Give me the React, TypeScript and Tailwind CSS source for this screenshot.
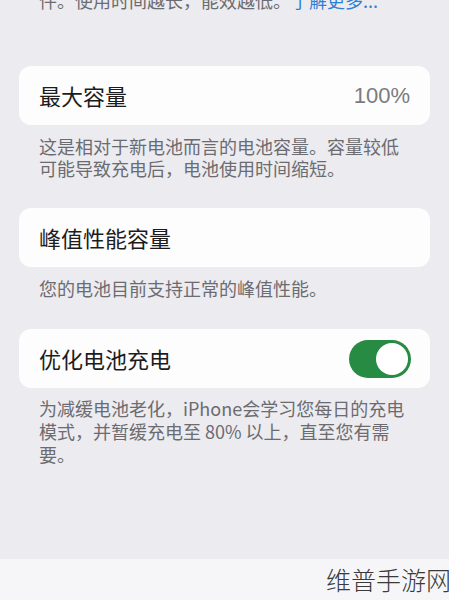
export default function App() {
  const font = { fontFamily: '"Noto Sans CJK SC", "Noto Sans", sans-serif' };

  return (
    <div
      className="w-[449px] h-[600px] overflow-hidden flex flex-col bg-[#ebebf0]"
      style={font}
    >
      <div className="flex-1 flex flex-col">
        {/* Cut-off footer from previous section */}
        <p className="mt-[-10px] px-[39px] text-[18px] leading-[21px] text-[#6c6c70] whitespace-nowrap">
          件。使用时间越长，能效越低。<span className="text-[#2f7fd1]">了解更多...</span>
        </p>

        {/* Maximum capacity */}
        <div className="mt-[55px] mx-[19px] h-[59px] rounded-[12px] bg-[#fdfdfd] flex items-center justify-between pl-[20px] pr-[20px]">
          <span className="text-[22px] text-[#1c1c1e]">最大容量</span>
          <span className="text-[22px] text-[#7b7b7f]" style={{ fontFamily: '"Liberation Sans", "Noto Sans", sans-serif' }}>
            100%
          </span>
        </div>
        <div className="mt-[10px] px-[39px] text-[18px] leading-[22px] text-[#6c6c70] flex flex-col">
          <span>这是相对于新电池而言的电池容量。容量较低</span>
          <span>可能导致充电后，电池使用时间缩短。</span>
        </div>

        {/* Peak performance */}
        <div className="mt-[29px] mx-[19px] h-[59px] rounded-[12px] bg-[#fdfdfd] flex items-center pl-[20px]">
          <span className="text-[22px] text-[#1c1c1e]">峰值性能容量</span>
        </div>
        <p className="mt-[10px] px-[39px] text-[18px] leading-[22px] text-[#6c6c70]">
          您的电池目前支持正常的峰值性能。
        </p>

        {/* Optimized charging */}
        <div className="mt-[30px] mx-[19px] h-[59px] rounded-[12px] bg-[#fdfdfd] flex items-center justify-between pl-[20px] pr-[19px]">
          <span className="text-[22px] text-[#1c1c1e]">优化电池充电</span>
          <div className="w-[62px] h-[38px] rounded-full bg-[#288b43] flex items-center justify-end p-[3px]">
            <div className="w-[32px] h-[32px] rounded-full bg-white" />
          </div>
        </div>
        <div className="mt-[9px] px-[39px] text-[18px] leading-[23px] text-[#6c6c70] flex flex-col">
          <span>为减缓电池老化，iPhone会学习您每日的充电</span>
          <span>模式，并暂缓充电至 80% 以上，直至您有需</span>
          <span>要。</span>
        </div>
      </div>

      {/* Bottom band with watermark */}
      <div className="h-[41px] bg-[#f6f6f8] flex items-center justify-end">
        <span className="text-[25px] font-light text-[#3a3a3a] mr-[-2px]">维普手游网</span>
      </div>
    </div>
  );
}
